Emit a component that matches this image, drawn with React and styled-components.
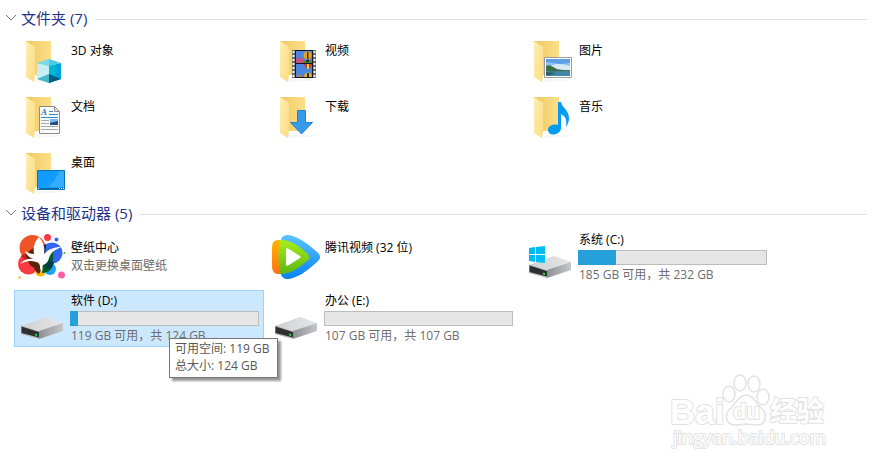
import { useState } from 'react';
import styled, { createGlobalStyle } from 'styled-components';

const folders = [
  { name: '3D 对象', icon: 'cube' },
  { name: '视频', icon: 'video' },
  { name: '图片', icon: 'picture' },
  { name: '文档', icon: 'document' },
  { name: '下载', icon: 'download' },
  { name: '音乐', icon: 'music' },
  { name: '桌面', icon: 'desktop' },
];

const devices = [
  { name: '壁纸中心', icon: 'wallpaper', note: '双击更换桌面壁纸' },
  { name: '腾讯视频 (32 位)', icon: 'tencent' },
  { name: '系统 (C:)', icon: 'system', free: 185, total: 232 },
  { name: '软件 (D:)', icon: 'drive', free: 119, total: 124, tip: true },
  { name: '办公 (E:)', icon: 'drive', free: 107, total: 107 },
];

const Cube = () => (
  <g>
    <path d="M19 25l12 3v17l-12-4z" fill="#c5eff2" />
    <path d="M31 28l12-3v16l-12 4z" fill="#00a4dc" />
    <path d="M31 28l6-1.5v11L31 36z" fill="#00b7d4" />
    <path d="M19 25l12-4 12 4-12 3z" fill="#4bcbe0" />
    <path d="M19 25l12-4v7z" fill="#7bdbe8" />
    <path d="M19 41l12-5v9z" fill="#43b9cc" />
    <path d="M31 36l12 5-12 4z" fill="#00607d" />
  </g>
);

const Video = () => (
  <g>
    <path d="M20 12h24v28H20z" fill="#6a6a6a" />
    <path
      d="M21.500 13v27M42.500 13v27"
      stroke="#f2f2f2"
      strokeWidth="2"
      strokeDasharray="2 2"
    />
    <path d="M23 12h18v28H23z" fill="#171717" />
    <path d="M24 13h16v12H24zM24 26h16v13H24z" fill="#4a86e0" />
    <path d="M24 21l4-2 4 3 2 3H24z" fill="#c9527e" />
    <path d="M31 23l4-1 5 1v2h-9z" fill="#3f8a3b" />
    <circle cx="35.500" cy="17.500" r="4" fill="#e5a21c" />
    <path d="M35 14h1.500v7.500H35z" fill="#3a2c50" />
    <path d="M34 22h3v2h-3z" fill="#3a2c1b" />
    <path d="M32 26h8c0 2-2 3-3 5h-2c-1-2-3-3-3-5z" fill="#c43a30" />
    <path d="M35 26h2v5h-2z" fill="#f4d33a" />
    <path d="M32 39c0-6 8-6 8 0z" fill="#e3b322" />
    <path d="M35 35h2v4h-2z" fill="#3c2c40" />
    <path d="M25 39c0-3 4-3 4 0z" fill="#d9742a" />
  </g>
);

const Picture = () => (
  <g>
    <path d="M18.500 19.500h27v20h-27z" fill="#fff" stroke="#9b9b9b" />
    <path d="M20 21h24v17H20z" fill="#8fc4ee" />
    <path d="M20 21h24v4l-10 1-14-2z" fill="#5f9fe8" />
    <path d="M25 28c5-3 11-2 19 0v4H24z" fill="#d6eaf2" />
    <path d="M20 28c3-2 6 0 9 2s9 2 15 2v2H20z" fill="#3e6d4c" />
    <path d="M20 33c7 1 15 0 24 0v5H20z" fill="#4287a7" />
    <path d="M20 34l10 1-6 2h-4z" fill="#2c5c62" />
  </g>
);

const Document = () => (
  <g>
    <path d="M21.500 12.500h15l5 5v22h-20z" fill="#fafafa" stroke="#8b8b8b" />
    <path d="M36.500 12.500v5h5z" fill="#e2e2e2" stroke="#8b8b8b" />
    <text
      x="23"
      y="21"
      fill="#1b82c5"
      fontFamily="Liberation Serif, serif"
      fontSize="9"
      fontWeight="700"
      fontStyle="italic"
    >
      A
    </text>
    <path d="M31 17.500h4M31 20.500h9M23 23.500h17" stroke="#2a8cce" />
    <path d="M23 26.500h8M23 29.500h8M23 32.500h17M23 35.500h17" stroke="#a9a9a9" />
    <path d="M32 25h8v6h-8z" fill="#234d7b" />
    <path d="M32 25h8v2l-8 2z" fill="#7bb4eb" />
  </g>
);

const Download = () => (
  <path
    d="M25.500 16.500h8v12h7L29.500 40l-11-11.500h7z"
    fill="#369be8"
    stroke="#2083ce"
  />
);

const Music = () => (
  <path
    d="M32 8h3c1 6 8 8 8 16 0 3-1 6-3 9 1-7 0-10-5-13v14c0 4-4 6.500-8 6.500-3 0-5-2-5-4.500 0-4 5-6.500 10-5z"
    fill="#049cf3"
  />
);

const Desktop = () => (
  <g>
    <path d="M19.500 20.500h27v19h-27z" fill="#129bff" stroke="#0873bd" />
    <path d="M46 21v16H30c5-4 9-9 11-16z" fill="#35adff" />
    <path d="M20 38.500h26" stroke="#0764a8" />
    <path d="M20 38.500h1M41 38.500h1M43 38.500h1M45 38.500h1" stroke="#fff" />
  </g>
);

const Wallpaper = () => (
  <g>
    <circle cx="14.500" cy="15" r="13" fill="#ef5427" />
    <circle cx="10.500" cy="31" r="10.500" fill="#f83a43" />
    <circle cx="34" cy="20" r="10.500" fill="#3166f5" />
    <circle cx="32" cy="36" r="6" fill="#1ba4fb" />
    <circle cx="22.500" cy="38" r="5.500" fill="#fdb913" />
    <path d="M3 23c4-4 11-3 16 5-5 1-12 0-16-5z" fill="#c5221b" />
    <path d="M8 22c4-6 9-8 14-9l2 22-3 6c-5-3-4-7-8-8-3-3-4-7-5-11z" fill="#5a2309" />
    <path d="M24 13l4-2-1 14-4 3z" fill="#16202b" />
    <path d="M23 24l12-6c1 5-1 9 0 13 0 5-5 9-11 9z" fill="#075c27" />
    <path d="M27 31c2-4 7-4 9-1-2 5-5 7-9 5z" fill="#043d49" />
    <path
      d="M21 4c5 6 6 11 5 17 5-5 10-7 17-7-6 3-10 5-12 11-1 4-3 6-6 7-1 2 0 4-1 7-2-2-2-4-2-6-1-3-2-4-4-4-5-2-10-1-16 2 4-5 9-6 14-5-4-1-7-3-9-8 3 2 6 3 9 3-1-6 0-12 5-17z"
      fill="#fff"
    />
    <circle cx="29.500" cy="4.500" r="3.500" fill="#f73943" />
    <circle cx="38.500" cy="6.500" r="2" fill="#3166f5" />
    <circle cx="46.500" cy="20" r="1" fill="#55aa25" />
    <circle cx="43.500" cy="42" r="3.500" fill="#fa61a4" />
    <circle cx="1.500" cy="44.500" r="1.200" fill="#fdb913" />
  </g>
);

const Tencent = () => (
  <g>
    <defs>
      <linearGradient id="tBlue" x1="0" y1="0" x2="0" y2="1">
        <stop offset="0" stopColor="#5bc4ff" />
        <stop offset="1" stopColor="#0781f4" />
      </linearGradient>
      <linearGradient id="tOrange" x1="0" y1="0" x2="0" y2="1">
        <stop offset="0" stopColor="#ffb300" />
        <stop offset="1" stopColor="#ff7113" />
      </linearGradient>
      <linearGradient id="tGreen" x1="0" y1="0" x2="0" y2="1">
        <stop offset="0" stopColor="#a8ee19" />
        <stop offset="1" stopColor="#5cb615" />
      </linearGradient>
    </defs>
    <path
      d="M9 8c0-4 3-6 7-6 9 1 18 7 29 17 4 3 4 7 0 10-11 10-20 16-29 17-4 0-7-2-7-6z"
      fill="url(#tBlue)"
    />
    <path
      d="M0 15C0 10 2 7 6 7h3v34H6c-4 0-6-3-6-8z"
      fill="url(#tOrange)"
    />
    <path
      d="M8 7c10-1 19 6 27 13 3 3 3 6 0 8-8 7-17 13-27 13-2-10-2-24 0-34z"
      fill="url(#tGreen)"
    />
    <path
      d="M14 17c0-2 1-2 3-1l11 7c1 1 1 1 0 2l-11 7c-2 1-3 1-3-1z"
      fill="#fff"
    />
  </g>
);

const Drive = () => (
  <g>
    <defs>
      <linearGradient id="driveTop" x1="0" y1="0" x2="1" y2="0">
        <stop offset="0" stopColor="#cfd0d2" />
        <stop offset="1" stopColor="#e6e6e9" />
      </linearGradient>
      <linearGradient id="driveSide" x1="0" y1="0" x2="1" y2="0">
        <stop offset="0" stopColor="#8e8f92" />
        <stop offset="1" stopColor="#c6c7ca" />
      </linearGradient>
    </defs>
    <path d="M3 32l25-9 17 6-24 9z" fill="url(#driveTop)" />
    <path d="M21 37l24-8v8l-24 8z" fill="url(#driveSide)" />
    <path d="M3 31.500l18 6V45L3 40z" fill="#b4b5b7" />
    <path d="M3.500 32.500l17.500 5.500v5.500L3.500 39z" fill="#2e2f31" />
    <path d="M17 39.500l2 .5v2l-2-.5z" fill="#21dc36" />
  </g>
);

const System = () => (
  <g>
    <Drive />
    <path
      d="M3 15l6-1v7H3zM10 14l9-1v8h-9zM3 22h6v7l-6-1zM10 22h9v8l-9-1z"
      fill="#00bcf2"
    />
  </g>
);

const glyphs = {
  cube: Cube,
  video: Video,
  picture: Picture,
  document: Document,
  download: Download,
  music: Music,
  desktop: Desktop,
  wallpaper: Wallpaper,
  tencent: Tencent,
  drive: Drive,
  system: System,
};

const Glyph = ({ name, folder }) => {
  const Shape = glyphs[name];
  return (
    <Icon viewBox="0 0 48 48" aria-hidden="true">
      {folder && (
        <g>
          <defs>
            <linearGradient id="folderBack" x1="0" y1="0" x2="1" y2="0">
              <stop offset="0" stopColor="#efc961" />
              <stop offset="1" stopColor="#fbdf8a" />
            </linearGradient>
            <linearGradient id="folderFront" x1="0" y1="0" x2="1" y2="1">
              <stop offset="0" stopColor="#ffefb3" />
              <stop offset="1" stopColor="#fadb81" />
            </linearGradient>
          </defs>
          <path d="M16 44l4-3h23l3 1-12 1z" fill="#f6f6f6" />
          <path d="M8 3h25v34H8z" fill="url(#folderBack)" />
          <path d="M8 3l9 6v28l-1 7-8-5z" fill="url(#folderFront)" />
        </g>
      )}
      <Shape />
    </Icon>
  );
};

const Group = ({ title, count, children }) => {
  const [open, setOpen] = useState(true);
  return (
    <section>
      <GroupHeader>
        <GroupToggle
          type="button"
          aria-expanded={open}
          onClick={() => setOpen(!open)}
        >
          <Chevron viewBox="0 0 12 8" $open={open} aria-hidden="true">
            <path d="M1 1l5 5 5-5" fill="none" stroke="#767676" />
          </Chevron>
          {title} ({count})
        </GroupToggle>
        <Rule />
      </GroupHeader>
      {open && children}
    </section>
  );
};

const Device = ({ item, selected, onSelect }) => {
  const hasSpace = item.total !== undefined;
  const used = hasSpace ? (1 - item.free / item.total) * 100 : 0;
  return (
    <Cell>
      <Tile type="button" $tall $selected={selected} onClick={onSelect}>
        <Glyph name={item.icon} />
        <Info $top={hasSpace ? 1 : 9}>
          <Name>{item.name}</Name>
          {item.note && <Note>{item.note}</Note>}
          {hasSpace && (
            <>
              <Bar>
                <Used style={{ width: `${used}%` }} />
              </Bar>
              <Note>
                {item.free} GB 可用，共 {item.total} GB
              </Note>
            </>
          )}
        </Info>
      </Tile>
      {item.tip && selected && (
        <Tooltip role="tooltip">
          <div>可用空间: {item.free} GB</div>
          <div>总大小: {item.total} GB</div>
        </Tooltip>
      )}
    </Cell>
  );
};

const Watermark = () => (
  <Footer>
    <Mark viewBox="0 0 160 80" aria-label="Baidu 经验">
      <g fill="#fff" stroke="#e2e2e2" strokeWidth="1.500">
        <ellipse cx="60" cy="21" rx="6" ry="8" />
        <ellipse cx="71" cy="10" rx="6" ry="8" />
        <ellipse cx="85" cy="11" rx="6" ry="8" />
        <ellipse cx="94" cy="24" rx="6" ry="8" />
        <path d="M77 22c7 0 10 8 14 12 8 6 7 17-2 18-5 0-8-1-12-1s-7 1-12 1c-9-1-10-12-2-18 4-4 7-12 14-12z" />
      </g>
      <MarkText x="1" y="51" $size={35}>
        Bai
      </MarkText>
      <MarkText x="64" y="46" $size={22}>
        du
      </MarkText>
      <MarkText x="101" y="48" $size={27}>
        经验
      </MarkText>
      <MarkText x="4" y="71" $size={18} $light>
        jingyan.baidu.com
      </MarkText>
    </Mark>
  </Footer>
);

const App = () => {
  const [selected, setSelected] = useState('软件 (D:)');
  return (
    <Page>
      <GlobalStyle />
      <Group title="文件夹" count={folders.length}>
        <Grid>
          {folders.map((item) => (
            <Cell key={item.name}>
              <Tile
                type="button"
                $selected={selected === item.name}
                onClick={() => setSelected(item.name)}
              >
                <Glyph name={item.icon} folder />
                <Info $top={7}>
                  <Name>{item.name}</Name>
                </Info>
              </Tile>
            </Cell>
          ))}
        </Grid>
      </Group>
      <Group title="设备和驱动器" count={devices.length}>
        <Grid $gap={4}>
          {devices.map((item) => (
            <Device
              key={item.name}
              item={item}
              selected={selected === item.name}
              onSelect={() => setSelected(item.name)}
            />
          ))}
        </Grid>
      </Group>
      <Watermark />
    </Page>
  );
};

const GlobalStyle = createGlobalStyle`
  * {
    box-sizing: border-box;
  }
  body {
    margin: 0;
    background: #fff;
    font-family: 'Open Sans', 'Noto Sans CJK SC', sans-serif;
    font-size: 12px;
    line-height: 18px;
    color: #000;
  }
  button {
    font: inherit;
    color: inherit;
    background: none;
    border: 0;
    padding: 0;
    text-align: left;
  }
`;

const Page = styled.main`
  padding: 7px 7px 0 5px;
`;

const GroupHeader = styled.div`
  display: flex;
  align-items: center;
  gap: 8px;
  height: 24px;
`;

const GroupToggle = styled.button`
  display: flex;
  align-items: center;
  gap: 4px;
  color: #1e3287;
  font-size: 15px;
  line-height: 22px;
  padding-bottom: 2px;
  white-space: nowrap;
`;

const Chevron = styled.svg`
  width: 12px;
  height: 8px;
  transform: rotate(${({ $open }) => ($open ? 0 : -90)}deg);
`;

const Rule = styled.div`
  flex: 1;
  height: 1px;
  background: #e2e2e2;
`;

const Grid = styled.ul`
  display: grid;
  grid-template-columns: repeat(auto-fill, 250px);
  gap: ${({ $gap }) => $gap || 0}px 4px;
  margin: 0;
  padding: 3px 0 0 9px;
  list-style: none;
`;

const Cell = styled.li`
  position: relative;
`;

const Tile = styled.button`
  display: flex;
  align-items: flex-start;
  gap: 4px;
  width: 100%;
  height: ${({ $tall }) => ($tall ? 57 : 56)}px;
  padding: 0 4px 0 3px;
  border: 1px solid ${({ $selected }) => ($selected ? '#99d1ff' : 'transparent')};
  background: ${({ $selected }) => ($selected ? '#cce8ff' : 'transparent')};
`;

const Icon = styled.svg`
  flex: none;
  width: 48px;
  height: 48px;
  margin-top: 3px;
`;

const Info = styled.span`
  display: flex;
  flex: 1;
  flex-direction: column;
  padding-top: ${({ $top }) => $top}px;
`;

const Name = styled.span`
  padding-left: 1px;
  white-space: nowrap;
`;

const Note = styled(Name)`
  color: #6d6d6d;
`;

const Bar = styled.span`
  display: flex;
  height: 15px;
  margin: 1px 0;
  background: #e6e6e6;
  box-shadow: inset 0 0 0 1px #bcbcbc;
`;

const Used = styled.span`
  background: #26a0da;
`;

const Tooltip = styled.div`
  position: absolute;
  z-index: 1;
  top: 48px;
  left: 155px;
  padding: 1px 8px 3px 5px;
  border: 1px solid #767676;
  background: #fff;
  color: #575757;
  line-height: 17px;
  white-space: nowrap;
  box-shadow: 3px 3px 2px rgba(0, 0, 0, 0.4);
`;

const Footer = styled.footer`
  display: flex;
  justify-content: flex-end;
  padding: 26px 38px 0 0;
`;

const Mark = styled.svg`
  width: 160px;
  height: 80px;
`;

const MarkText = styled.text`
  font-family: ${({ $light }) =>
    $light ? "'Open Sans'" : "'Liberation Sans', 'Noto Sans CJK SC'"}, sans-serif;
  font-size: ${({ $size }) => $size}px;
  font-weight: ${({ $light }) => ($light ? 400 : 700)};
  fill: #fff;
  stroke: #e2e2e2;
  stroke-width: 2px;
  paint-order: stroke;
`;

export default App;
